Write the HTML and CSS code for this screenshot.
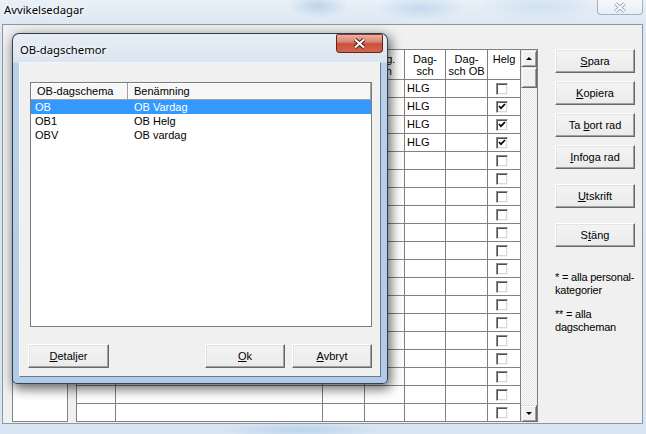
FILE: index.html
```html
<!DOCTYPE html>
<html lang="sv">
<head>
    <meta charset="UTF-8">
    <title>Avvikelsedagar</title>
    <link rel="stylesheet" href="styles.css">
</head>
<body>
<div class="window">
    <div class="titlebar">
        <span class="title">Avvikelsedagar</span>
        <span class="ghost-close">
            <svg width="14" height="11" viewBox="0 0 14 11"><path d="M2.5 1.5l9 8M11.5 1.5l-9 8" stroke="#8e99a6" stroke-width="3.6"/><path d="M2.5 1.5l9 8M11.5 1.5l-9 8" stroke="#f6f8fa" stroke-width="2"/></svg>
        </span>
    </div>

    <div class="client">
        <div class="leftbox"></div>

        <div class="gridbox">
            <div class="grid">
                <div class="hd"></div>
                <div class="hd">Benämning</div>
                <div class="hd">Dag-<br>typ</div>
                <div class="hd">Avg.<br>lön</div>
                <div class="hd">Dag-<br>sch</div>
                <div class="hd">Dag-<br>sch OB</div>
                <div class="hd">Helg</div>

                <div></div><div></div><div></div><div></div><div class="tx">HLG</div><div></div><div class="ck"><i class="cb"></i></div>
                <div></div><div></div><div></div><div></div><div class="tx">HLG</div><div></div><div class="ck"><i class="cb"><svg width="8" height="7" viewBox="0 0 8 7"><path d="M1 3l2 2.2L7 1" stroke="#000" stroke-width="1.7" fill="none"/></svg></i></div>
                <div></div><div></div><div></div><div></div><div class="tx">HLG</div><div></div><div class="ck"><i class="cb"><svg width="8" height="7" viewBox="0 0 8 7"><path d="M1 3l2 2.2L7 1" stroke="#000" stroke-width="1.7" fill="none"/></svg></i></div>
                <div></div><div></div><div></div><div></div><div class="tx">HLG</div><div></div><div class="ck"><i class="cb"><svg width="8" height="7" viewBox="0 0 8 7"><path d="M1 3l2 2.2L7 1" stroke="#000" stroke-width="1.7" fill="none"/></svg></i></div>
                <div></div><div></div><div></div><div></div><div></div><div></div><div class="ck"><i class="cb"></i></div>
                <div></div><div></div><div></div><div></div><div></div><div></div><div class="ck"><i class="cb"></i></div>
                <div></div><div></div><div></div><div></div><div></div><div></div><div class="ck"><i class="cb"></i></div>
                <div></div><div></div><div></div><div></div><div></div><div></div><div class="ck"><i class="cb"></i></div>
                <div></div><div></div><div></div><div></div><div></div><div></div><div class="ck"><i class="cb"></i></div>
                <div></div><div></div><div></div><div></div><div></div><div></div><div class="ck"><i class="cb"></i></div>
                <div></div><div></div><div></div><div></div><div></div><div></div><div class="ck"><i class="cb"></i></div>
                <div></div><div></div><div></div><div></div><div></div><div></div><div class="ck"><i class="cb"></i></div>
                <div></div><div></div><div></div><div></div><div></div><div></div><div class="ck"><i class="cb"></i></div>
                <div></div><div></div><div></div><div></div><div></div><div></div><div class="ck"><i class="cb"></i></div>
                <div></div><div></div><div></div><div></div><div></div><div></div><div class="ck"><i class="cb"></i></div>
                <div></div><div></div><div></div><div></div><div></div><div></div><div class="ck"><i class="cb"></i></div>
                <div></div><div></div><div></div><div></div><div></div><div></div><div class="ck"><i class="cb"></i></div>
                <div></div><div></div><div></div><div></div><div></div><div></div><div class="ck"><i class="cb"></i></div>
                <div></div><div></div><div></div><div></div><div></div><div></div><div class="ck"><i class="cb"></i></div>
            </div>
            <div class="vscroll">
                <div class="sb-btn up"></div>
                <div class="sb-thumb"></div>
                <div class="sb-track"></div>
                <div class="sb-btn down"></div>
            </div>
        </div>

        <div class="side">
            <button class="btn"><u>S</u>para</button>
            <button class="btn"><u>K</u>opiera</button>
            <button class="btn">Ta <u>b</u>ort rad</button>
            <button class="btn"><u>I</u>nfoga rad</button>
            <button class="btn sep"><u>U</u>tskrift</button>
            <button class="btn sep">S<u>t</u>äng</button>
            <p class="note first">* = alla personal-<br>kategorier</p>
            <p class="note">** = alla<br>dagscheman</p>
        </div>
    </div>
</div>

<div class="dialog">
    <div class="dlg-title">
        <span class="dlg-name">OB-dagschemor</span>
        <span class="dlg-close">
            <svg width="13" height="11" viewBox="0 0 13 11"><path d="M2 1.5l9 8M11 1.5l-9 8" stroke="#4e160e" stroke-width="3.8"/><path d="M2 1.5l9 8M11 1.5l-9 8" stroke="#fff" stroke-width="2.1"/></svg>
        </span>
    </div>
    <div class="dlg-body">
        <div class="listbox">
            <div class="lb-head">
                <span class="c1">OB-dagschema</span>
                <span class="c2">Benämning</span>
            </div>
            <div class="lb-row selected"><span class="c1">OB</span><span class="c2">OB Vardag</span></div>
            <div class="lb-row"><span class="c1">OB1</span><span class="c2">OB Helg</span></div>
            <div class="lb-row"><span class="c1">OBV</span><span class="c2">OB vardag</span></div>
        </div>
        <div class="dlg-buttons">
            <button class="btn wide"><u>D</u>etaljer</button>
            <button class="btn push"><u>O</u>k</button>
            <button class="btn"><u>A</u>vbryt</button>
        </div>
    </div>
</div>

</body>
</html>
```

FILE: styles.css
```css
* {
    box-sizing: border-box;
}
body {
    margin: 0;
    width: 646px;
    height: 434px;
    overflow: hidden;
    position: relative;
    font-family: "Liberation Sans", Arial, sans-serif;
    font-size: 11px;
    color: #000;
}

/* main window, aero glass frame */
.window {
    height: 434px;
    display: flex;
    flex-direction: column;
    background:
        radial-gradient(ellipse 30px 12px at 318px 6px, rgba(140, 178, 216, .45), transparent),
        radial-gradient(ellipse 45px 12px at 420px 8px, rgba(150, 188, 224, .4), transparent),
        radial-gradient(ellipse 60px 14px at 540px 6px, rgba(170, 200, 230, .35), transparent),
        radial-gradient(ellipse 80px 8px at 300px 430px, rgba(150, 190, 228, .45), transparent),
        linear-gradient(#e9f0f8, #dde8f3 24px, #d9e5f2);
}
.titlebar {
    height: 24px;
    display: flex;
    align-items: flex-start;
    padding-left: 4px;
}
.title {
    font-family: "Noto Sans", "Open Sans", sans-serif;
    font-size: 11.3px;
    line-height: 16px;
    padding-top: 2px;
    text-shadow: 0 0 6px #fff, 0 0 3px #fff;
}
.ghost-close {
    margin-left: auto;
    margin-right: 3px;
    width: 46px;
    height: 15px;
    border: 1px solid rgba(80, 95, 115, .45);
    border-top: none;
    border-radius: 0 0 4px 4px;
    background: linear-gradient(rgba(255, 255, 255, .55), rgba(255, 255, 255, .15));
    display: flex;
    align-items: center;
    justify-content: center;
}

.client {
    margin: 0 3px 0 2px;
    height: 400px;
    border: 1px solid #8d97a3;
    background: #f0f0f0;
    display: flex;
    align-items: flex-start;
    padding: 24px 0 0 9px;
}
.leftbox {
    width: 56px;
    height: 373px;
    border: 1px solid #828282;
    background: #fff;
}

/* data grid */
.gridbox {
    margin-left: 8px;
    height: 373px;
    display: flex;
    border: 1px solid #808080;
    border-bottom: none;
    background: #fff;
}
.grid {
    display: grid;
    grid-template-columns: 39px 207px 42px 40px 41px 42px 33px;
    grid-template-rows: 30px;
    grid-auto-rows: 18px;
}
.grid > div {
    border-right: 1px solid #808080;
    border-bottom: 1px solid #808080;
}
.grid .hd {
    text-align: center;
    line-height: 12px;
    padding-top: 3px;
    white-space: nowrap;
    overflow: hidden;
}
.grid .tx {
    line-height: 17px;
    padding-left: 2px;
}
.grid .ck {
    display: flex;
    align-items: center;
    padding-left: 8px;
}
.cb {
    width: 12px;
    height: 12px;
    background: #fff;
    border: 1px solid;
    border-color: #8a8a8a #f4f4f4 #f4f4f4 #8a8a8a;
    box-shadow: inset 1px 1px #505050, inset -1px -1px #d8d8d8;
    display: flex;
    align-items: center;
    justify-content: center;
}

.vscroll {
    width: 16px;
    display: flex;
    flex-direction: column;
}
.sb-btn, .sb-thumb {
    background: #f0f0f0;
    border: 1px solid;
    border-color: #e3e3e3 #696969 #696969 #e3e3e3;
    box-shadow: inset 1px 1px #fff, inset -1px -1px #a0a0a0;
}
.sb-btn {
    height: 17px;
    display: flex;
    align-items: center;
    justify-content: center;
}
.sb-btn::after {
    content: "";
    border: 3px solid transparent;
}
.sb-btn.up::after {
    border-top: 0;
    border-bottom: 3px solid #000;
    margin-bottom: 1px;
}
.sb-btn.down::after {
    border-bottom: 0;
    border-top: 3px solid #000;
}
.sb-thumb {
    height: 21px;
}
.sb-track {
    flex: 1;
    background-color: #fff;
    background-image: conic-gradient(#e2e2e2 25%, #fff 0 50%, #e2e2e2 0 75%, #fff 0);
    background-size: 2px 2px;
}

/* right column */
.side {
    margin-left: 17px;
    width: 80px;
    display: flex;
    flex-direction: column;
    gap: 8px;
}
.btn {
    width: 80px;
    height: 24px;
    padding: 0;
    font-family: "Liberation Sans", Arial, sans-serif;
    font-size: 11px;
    font-weight: normal;
    color: #000;
    background: linear-gradient(#f3f3f3, #ebebeb);
    border: 1px solid;
    border-color: #fff #696969 #696969 #fff;
    box-shadow: inset -1px -1px #a0a0a0, inset 1px 1px #e3e3e3;
}
.btn.sep {
    margin-top: 7px;
}
.note {
    margin: 3px 0 0;
    line-height: 13px;
    white-space: nowrap;
    letter-spacing: -0.2px;
}
.note.first {
    margin-top: 16px;
}

/* OB-dagschemor dialog */
.dialog {
    position: absolute;
    left: 12px;
    top: 33px;
    width: 376px;
    height: 351px;
    border: 1px solid rgba(25, 35, 50, .85);
    border-radius: 7px 7px 5px 5px;
    background: linear-gradient(#e6edf5, #dbe5f0 28px, #b9d2ec 29px, #b0cbe8);
    box-shadow: 2px 4px 12px 1px rgba(0, 0, 0, .6);
    display: flex;
    flex-direction: column;
}
.dlg-title {
    height: 28px;
    display: flex;
    align-items: flex-start;
    padding: 0 4px 0 7px;
}
.dlg-name {
    font-family: "Noto Sans", "Open Sans", sans-serif;
    font-size: 11.3px;
    line-height: 16px;
    margin-top: 8px;
    text-shadow: 0 0 8px #fff, 0 0 4px #fff;
}
.dlg-close {
    margin-left: auto;
    width: 47px;
    height: 19px;
    border: 1px solid #6a2118;
    border-top-color: #8a3a30;
    border-radius: 2px 2px 4px 4px;
    background: linear-gradient(#eab1a4, #d98572 40%, #c8503b 52%, #d4664f);
    display: flex;
    align-items: center;
    justify-content: center;
}
.dlg-body {
    flex: 1;
    margin: 0 6px 6px;
    background: #f0f0f0;
    border: 1px solid;
    border-color: #f4f7fa #6b7b8c #6b7b8c #f4f7fa;
    padding: 19px 8px 0;
    display: flex;
    flex-direction: column;
}
.listbox {
    margin-left: 2px;
    height: 245px;
    border: 1px solid #7d7d7d;
    background: #fff;
}
.lb-head {
    display: flex;
    height: 17px;
}
.lb-head span {
    line-height: 16px;
    padding-left: 6px;
    background: #f7f7f7;
    border-right: 1px solid #a0a0a0;
    border-bottom: 1px solid #a0a0a0;
    box-shadow: inset 1px 1px #fff;
}
.lb-row {
    display: flex;
    height: 14px;
    line-height: 14px;
}
.lb-row .c1 {
    padding-left: 4px;
}
.lb-row .c2 {
    padding-left: 6px;
}
.c1 {
    width: 97px;
}
.c2 {
    flex: 1;
}
.lb-row.selected {
    background: #3399ff;
    color: #fff;
}
.dlg-buttons {
    margin-top: 17px;
    display: flex;
    gap: 7px;
}
.btn.wide {
    width: 81px;
}
.btn.push {
    margin-left: auto;
}
```
